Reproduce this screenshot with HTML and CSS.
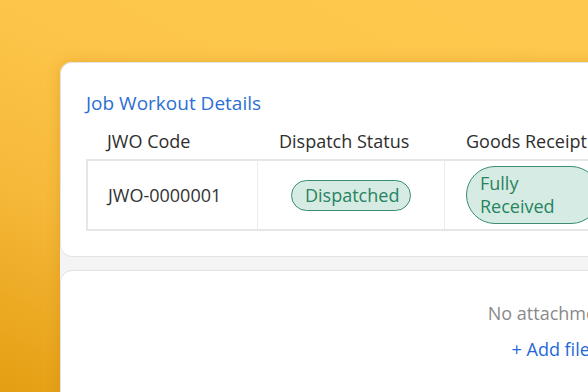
FILE: index.html
```html
<!DOCTYPE html>
<html lang="en">
<head>
<meta charset="utf-8">
<title>Job Workout Details</title>
<link rel="stylesheet" href="styles.css">
</head>
<body>
<div class="panel">
  <section class="card details">
    <h2 class="title">Job Workout Details</h2>
    <div class="thead">
      <div class="th">JWO Code</div>
      <div class="th">Dispatch Status</div>
      <div class="th">Goods Receipt Status</div>
    </div>
    <div class="tbody">
      <div class="row">
        <div class="td code">JWO-0000001</div>
        <div class="td status"><span class="badge">Dispatched</span></div>
        <div class="td receipt"><span class="badge badge-wrap">Fully Received</span></div>
      </div>
    </div>
  </section>
  <section class="card attachments">
    <p class="empty">No attachments</p>
    <a class="add" href="#">+ Add files</a>
  </section>
</div>
</body>
</html>
```
FILE: styles.css
```css
* { box-sizing: border-box; }
html, body { margin: 0; padding: 0; }
body {
  width: 588px;
  height: 392px;
  overflow: hidden;
  font-family: "Open Sans", "Noto Sans", sans-serif;
  font-size: 18px;
  color: #333;
  background: linear-gradient(205deg, #fec84e 0%, #fdc64b 40%, #f6b93a 68%, #e49e12 100%);
}
.panel {
  margin: 62px 0 0 60px;
  width: 990px;
  height: 400px;
  background: #f4f4f4;
  border-radius: 12px 0 0 0;
  box-shadow: 0 0 14px rgba(190, 120, 0, 0.3);
  display: flex;
  flex-direction: column;
  gap: 13px;
}
.card {
  background: #fff;
  border: 1px solid #e3e3e3;
  border-radius: 12px;
}
.details {
  padding: 28px 25px 25px 25px;
}
.title {
  margin: 0;
  font-size: 19px;
  font-weight: 400;
  line-height: 24px;
  color: #2c6fd4;
}
.thead {
  margin-top: 14px;
  display: grid;
  grid-template-columns: 172px 187px 1fr;
  padding: 0 0 6px 0;
}
.th {
  padding-left: 21px;
  line-height: 24px;
  color: #2e2e2e;
  white-space: nowrap;
}
.tbody {
  border: 2px solid #e6e6e6;
  border-right: none;
}
.row {
  display: grid;
  grid-template-columns: 170px 187px 1fr;
}
.td {
  display: flex;
  align-items: center;
  padding: 5px 20px;
  border-right: 1px solid #ececec;
}
.code { color: #333; }
.status { padding-left: 33px; }
.receipt { padding-left: 21px; }
.badge {
  display: inline-block;
  padding: 3px 11px 3px 13px;
  line-height: 23px;
  color: #26845f;
  background: #d6ebe3;
  border: 1.5px solid #3a8d70;
  border-radius: 999px;
  white-space: nowrap;
}
.badge-wrap {
  width: 134px;
  padding: 5px 13px;
  white-space: normal;
}
.attachments {
  flex: 1;
  padding-top: 30px;
  display: flex;
  flex-direction: column;
  align-items: center;
  gap: 12px;
}
.empty {
  margin: 0;
  line-height: 24px;
  color: #8a8a8a;
}
.add {
  line-height: 24px;
  color: #1f68d8;
  text-decoration: none;
  font-weight: 500;
}
```
